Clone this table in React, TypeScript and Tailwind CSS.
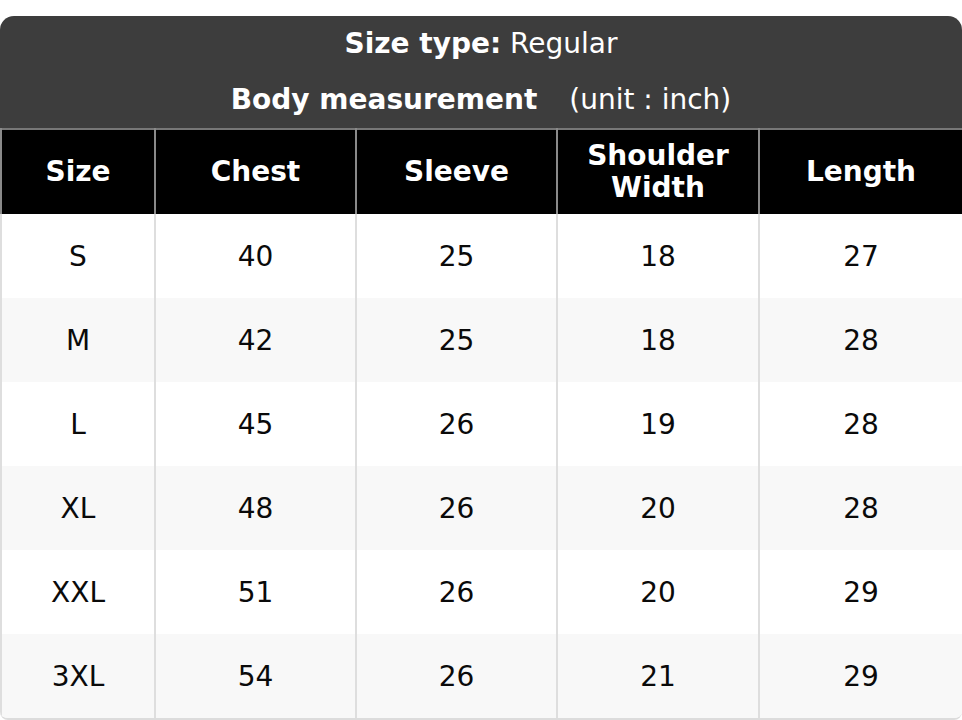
const headers = ['Size', 'Chest', 'Sleeve', 'Shoulder Width', 'Length'];

const rows = [
  ['S', '40', '25', '18', '27'],
  ['M', '42', '25', '18', '28'],
  ['L', '45', '26', '19', '28'],
  ['XL', '48', '26', '20', '28'],
  ['XXL', '51', '26', '20', '29'],
  ['3XL', '54', '26', '21', '29'],
];

export default function App() {
  return (
    <div className="w-[962px] pt-4 bg-white" style={{ fontFamily: '"DejaVu Sans", Verdana, sans-serif' }}>
      <div className="rounded-t-[14px] rounded-b-[8px] overflow-hidden border-b-2 border-[#dcdcdc]">
        {/* title block */}
        <div className="bg-[#3d3d3d] text-white text-center text-[28px] pt-3 pb-[12px]">
          <p className="leading-8">
            <span className="font-bold">Size type:</span> Regular
          </p>
          <p className="leading-8 mt-[24px]">
            <span className="font-bold">Body measurement</span>
            <span className="ml-8">(unit : inch)</span>
          </p>
        </div>

        <table className="w-full table-fixed border-collapse text-[28px]">
          <colgroup>
            <col className="w-[154px]" />
            <col className="w-[201px]" />
            <col className="w-[201px]" />
            <col className="w-[202px]" />
            <col className="w-[204px]" />
          </colgroup>
          <thead>
            <tr className="bg-black text-white h-[85px] border-t-2 border-[#777]">
              {headers.map((h, i) => (
                <th
                  key={h}
                  className={
                    'font-bold leading-[32px] border-l-2 border-[#8a8a8a] ' +
                    (i === headers.length - 1 ? 'border-r-2' : '')
                  }
                >
                  {h === 'Shoulder Width' ? (
                    <>
                      Shoulder
                      <br />
                      Width
                    </>
                  ) : (
                    h
                  )}
                </th>
              ))}
            </tr>
          </thead>
          <tbody>
            {rows.map((r, ri) => (
              <tr key={r[0]} className={'h-[84px] ' + (ri % 2 === 1 ? 'bg-[#f8f8f8]' : 'bg-white')}>
                {r.map((c, ci) => (
                  <td
                    key={ci}
                    className={
                      'text-center pt-[2px] text-[#0a0a0a] border-l-2 border-[#dedede] ' +
                      (ci === r.length - 1 ? 'border-r-2' : '')
                    }
                  >
                    {c}
                  </td>
                ))}
              </tr>
            ))}
          </tbody>
        </table>
      </div>
    </div>
  );
}
